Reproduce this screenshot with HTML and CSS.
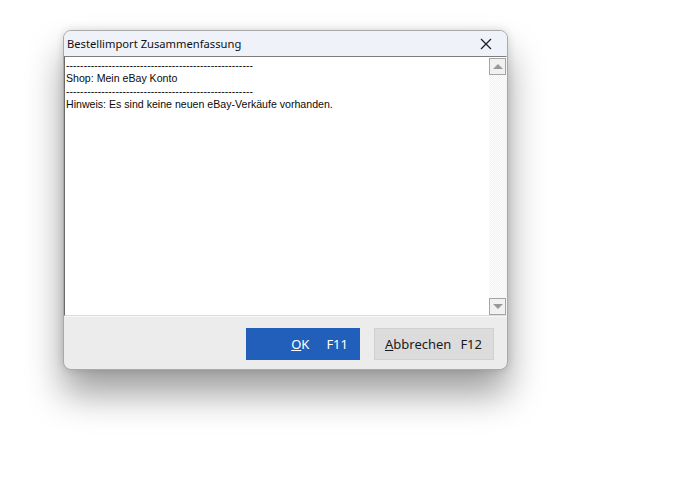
FILE: index.html
```html
<!DOCTYPE html>
<html lang="de">
<head>
  <meta charset="UTF-8" />
  <title>Bestellimport Zusammenfassung</title>
  <link rel="stylesheet" href="styles.css">
</head>
<body>
  <div class="dialog">
    <div class="titlebar">
      <span class="title">Bestellimport Zusammenfassung</span>
      <button class="close" aria-label="Schließen">
        <svg width="12" height="12" viewBox="0 0 12 12"><path d="M1 1L11 11M11 1L1 11" stroke="#1c1c1c" stroke-width="1.2" fill="none"/></svg>
      </button>
    </div>

    <div class="memo">
      <div class="memo-text">
        <div>-----------------------------------------------------</div>
        <div>Shop: Mein eBay Konto</div>
        <div>-----------------------------------------------------</div>
        <div>Hinweis: Es sind keine neuen eBay-Verkäufe vorhanden.</div>
      </div>
      <div class="scrollbar">
        <div class="sb-btn"><span class="arrow up"></span></div>
        <div class="sb-track"></div>
        <div class="sb-btn"><span class="arrow down"></span></div>
      </div>
    </div>

    <div class="footer">
      <button class="btn primary"><span><u>O</u>K</span><span class="key">F11</span></button>
      <button class="btn cancel"><span><u>A</u>bbrechen</span><span class="key">F12</span></button>
    </div>
  </div>
</body>
</html>
```

FILE: styles.css
```css
* { box-sizing: border-box; }
html, body { height: 100%; }
body {
  margin: 0;
  background: #fff;
  font-family: 'Liberation Sans', Arial, sans-serif;
  overflow: hidden;
}
.dialog {
  width: 445px;
  height: 340px;
  margin: 30px 0 0 63px;
  display: flex;
  flex-direction: column;
  border: 1px solid #a9a9a9;
  border-radius: 8px;
  overflow: hidden;
  background: #ececec;
  box-shadow: 0 24px 36px rgba(0,0,0,0.38), 0 0 8px rgba(0,0,0,0.14);
}
.titlebar {
  height: 25px;
  flex: none;
  display: flex;
  align-items: center;
  justify-content: space-between;
  background: #eff2f8;
  padding: 0 0 0 3px;
}
.title {
  font-family: 'Noto Sans', sans-serif;
  font-size: 11.2px;
  color: #111;
}
.close {
  width: 30px;
  height: 25px;
  border: none;
  background: none;
  padding: 0;
  margin-right: 6px;
  display: flex;
  align-items: center;
  justify-content: center;
}
.memo {
  flex: 1;
  display: flex;
  background: #fff;
  border-top: 1px solid #7d7d7d;
  border-left: 1px solid #6a6a6a;
  border-bottom: 1px solid #dcdcdc;
  border-right: 1px solid #f2f2f2;
}
.memo-text {
  flex: 1;
  padding: 2px 0 0 1px;
  font-family: 'Liberation Sans', Tahoma, sans-serif;
  font-size: 10.6px;
  line-height: 13px;
  color: #0a0a0a;
}
.scrollbar {
  width: 17px;
  display: flex;
  flex-direction: column;
  padding-top: 1px;
}
.sb-btn {
  height: 17px;
  flex: none;
  border: 1px solid #a5a5a5;
  background: #f1f1f1;
  display: flex;
  align-items: center;
  justify-content: center;
}
.sb-track {
  flex: 1;
  background: repeating-conic-gradient(#f0f0f0 0 25%, #fff 0 50%) 0 0 / 2px 2px;
}
.arrow {
  width: 0;
  height: 0;
  border-left: 5px solid transparent;
  border-right: 5px solid transparent;
}
.arrow.up { border-bottom: 5px solid #9a9a9a; }
.arrow.down { border-top: 5px solid #9a9a9a; }
.footer {
  height: 53px;
  flex: none;
  display: flex;
  justify-content: flex-end;
  align-items: flex-start;
  gap: 14px;
  padding: 11px 13px 0 0;
  border-top: 1px solid #f7f7f7;
}
.btn {
  height: 32px;
  display: flex;
  align-items: center;
  justify-content: flex-end;
  padding: 0 11px 0 14px;
  border: 1px solid #d0d0d0;
  background: #dcdcdc;
  color: #1a1a1a;
  font-family: 'Noto Sans', sans-serif;
  font-size: 13px;
}
.btn.primary {
  width: 114px;
  gap: 17px;
  padding-right: 11px;
  border-color: #225fbb;
  background: #225fbb;
  color: #fff;
}
.btn.cancel {
  width: 120px;
  gap: 9px;
}
```
